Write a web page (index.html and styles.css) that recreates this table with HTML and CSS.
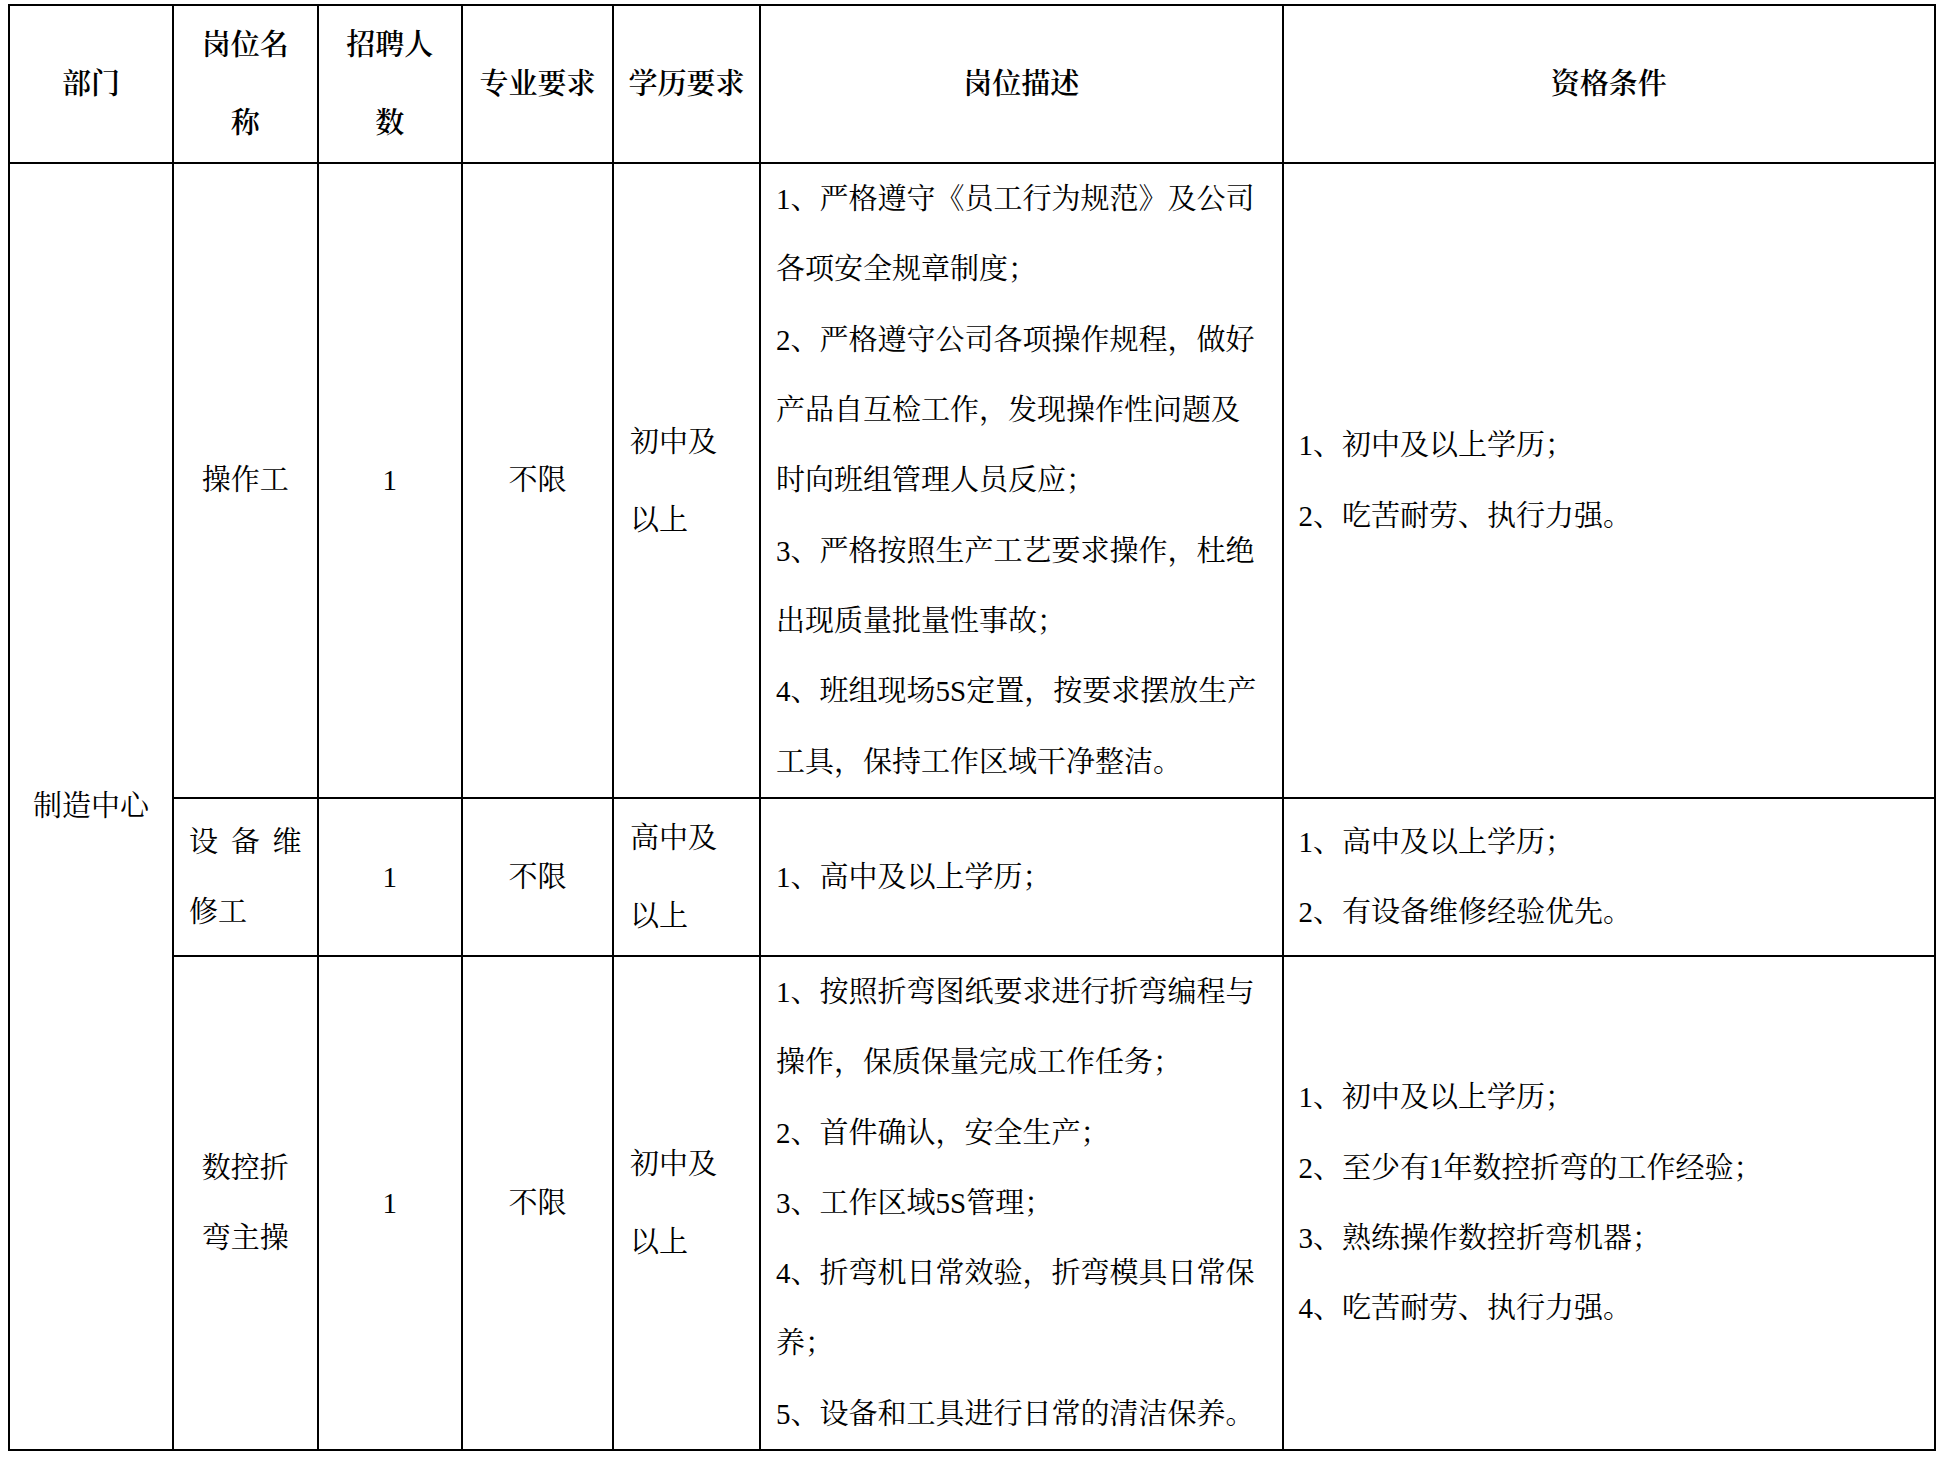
FILE: index.html
```html
<!DOCTYPE html>
<html lang="zh-CN">
<head>
<meta charset="utf-8">
<title>招聘岗位</title>
<link rel="stylesheet" href="styles.css">
</head>
<body>
<table class="jobs">
  <colgroup>
    <col class="c-dept"><col class="c-name"><col class="c-num"><col class="c-major"><col class="c-edu"><col class="c-desc"><col class="c-req">
  </colgroup>
  <thead>
    <tr class="r-head">
      <th>部门</th>
      <th><span class="ln">岗位名</span><span class="ln">称</span></th>
      <th><span class="ln">招聘人</span><span class="ln">数</span></th>
      <th>专业要求</th>
      <th>学历要求</th>
      <th>岗位描述</th>
      <th>资格条件</th>
    </tr>
  </thead>
  <tbody>
    <tr class="r1">
      <td rowspan="3" class="center">制造中心</td>
      <td class="center">操作工</td>
      <td class="center">1</td>
      <td class="center">不限</td>
      <td class="edu"><span class="ln">初中及</span><span class="ln">以上</span></td>
      <td>
        <span class="ln">1、严格遵守《员工行为规范》及公司</span>
        <span class="ln">各项安全规章制度；</span>
        <span class="ln">2、严格遵守公司各项操作规程，做好</span>
        <span class="ln">产品自互检工作，发现操作性问题及</span>
        <span class="ln">时向班组管理人员反应；</span>
        <span class="ln">3、严格按照生产工艺要求操作，杜绝</span>
        <span class="ln">出现质量批量性事故；</span>
        <span class="ln">4、班组现场5S定置，按要求摆放生产</span>
        <span class="ln">工具，保持工作区域干净整洁。</span>
      </td>
      <td>
        <span class="ln">1、初中及以上学历；</span>
        <span class="ln">2、吃苦耐劳、执行力强。</span>
      </td>
    </tr>
    <tr class="r2">
      <td><span class="ln jst">设备维</span><span class="ln">修工</span></td>
      <td class="center">1</td>
      <td class="center">不限</td>
      <td class="edu"><span class="ln">高中及</span><span class="ln">以上</span></td>
      <td><span class="ln">1、高中及以上学历；</span></td>
      <td>
        <span class="ln">1、高中及以上学历；</span>
        <span class="ln">2、有设备维修经验优先。</span>
      </td>
    </tr>
    <tr class="r3">
      <td class="center"><span class="ln">数控折</span><span class="ln">弯主操</span></td>
      <td class="center">1</td>
      <td class="center">不限</td>
      <td class="edu"><span class="ln">初中及</span><span class="ln">以上</span></td>
      <td>
        <span class="ln">1、按照折弯图纸要求进行折弯编程与</span>
        <span class="ln">操作，保质保量完成工作任务；</span>
        <span class="ln">2、首件确认，安全生产；</span>
        <span class="ln">3、工作区域5S管理；</span>
        <span class="ln">4、折弯机日常效验，折弯模具日常保</span>
        <span class="ln">养；</span>
        <span class="ln">5、设备和工具进行日常的清洁保养。</span>
      </td>
      <td>
        <span class="ln">1、初中及以上学历；</span>
        <span class="ln">2、至少有1年数控折弯的工作经验；</span>
        <span class="ln">3、熟练操作数控折弯机器；</span>
        <span class="ln">4、吃苦耐劳、执行力强。</span>
      </td>
    </tr>
  </tbody>
</table>
</body>
</html>
```

FILE: styles.css
```css
html, body {
  margin: 0;
  padding: 0;
  background: #fff;
}
body {
  font-family: "Liberation Serif", "Noto Serif CJK SC", "Noto Sans CJK SC", serif;
  font-size: 29px;
  color: #000;
}
.jobs {
  border-collapse: collapse;
  table-layout: fixed;
  width: 1928px;
  margin: 4px 0 0 8px;
}
.c-dept { width: 164px; }
.c-name { width: 144.5px; }
.c-num { width: 144.5px; }
.c-major { width: 151px; }
.c-edu { width: 147px; }
.c-desc { width: 522.5px; }
.c-req { width: 652.5px; }

.jobs th,
.jobs td {
  border: 2px solid #000;
  padding: 0 15px;
  vertical-align: middle;
}
.jobs th {
  font-weight: 600;
  line-height: 78px;
  text-align: center;
  white-space: nowrap;
  padding: 0 8px;
}
.jobs td {
  font-weight: 400;
  line-height: 70.3px;
  text-align: left;
}
.jobs td.center {
  text-align: center;
}
.jobs td.edu {
  line-height: 78px;
  padding-left: 16px;
}
.r-head { height: 158px; }
.r1 { height: 635px; }
.r2 { height: 158px; }
.r3 { height: 494px; }

.ln {
  display: block;
  white-space: nowrap;
}
.jst {
  text-align: justify;
  text-align-last: justify;
}
```
